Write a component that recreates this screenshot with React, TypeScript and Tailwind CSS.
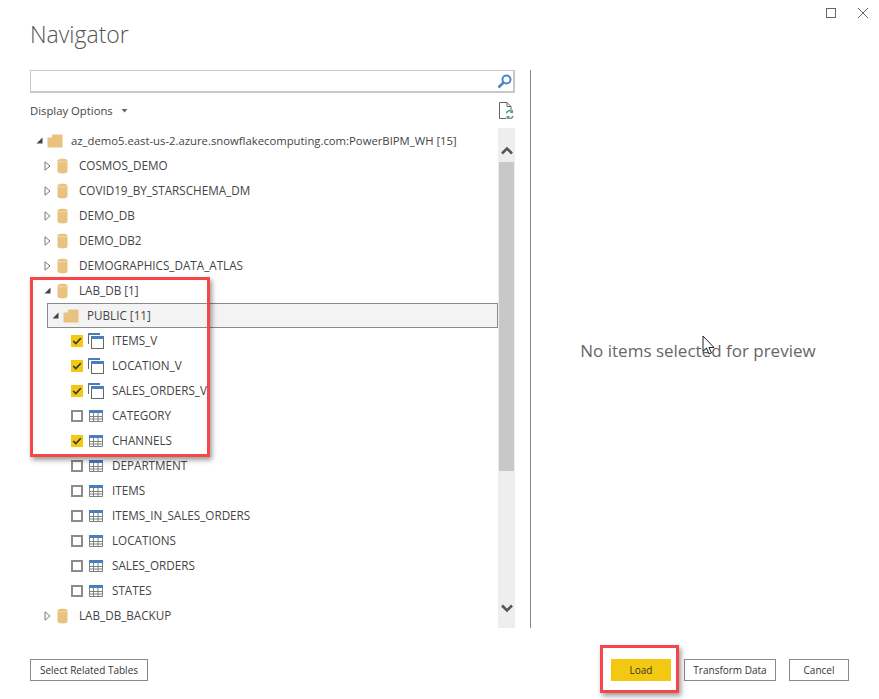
const FONT = "font-['Open_Sans','Noto_Sans',sans-serif]";

type Row =
  | { kind: "root" | "db" | "schema"; label: string; open?: boolean }
  | { kind: "view" | "table"; label: string; checked?: boolean };

const ROWS: Row[] = [
  { kind: "root", label: "az_demo5.east-us-2.azure.snowflakecomputing.com:PowerBIPM_WH [15]", open: true },
  { kind: "db", label: "COSMOS_DEMO" },
  { kind: "db", label: "COVID19_BY_STARSCHEMA_DM" },
  { kind: "db", label: "DEMO_DB" },
  { kind: "db", label: "DEMO_DB2" },
  { kind: "db", label: "DEMOGRAPHICS_DATA_ATLAS" },
  { kind: "db", label: "LAB_DB [1]", open: true },
  { kind: "schema", label: "PUBLIC [11]", open: true },
  { kind: "view", label: "ITEMS_V", checked: true },
  { kind: "view", label: "LOCATION_V", checked: true },
  { kind: "view", label: "SALES_ORDERS_V", checked: true },
  { kind: "table", label: "CATEGORY" },
  { kind: "table", label: "CHANNELS", checked: true },
  { kind: "table", label: "DEPARTMENT" },
  { kind: "table", label: "ITEMS" },
  { kind: "table", label: "ITEMS_IN_SALES_ORDERS" },
  { kind: "table", label: "LOCATIONS" },
  { kind: "table", label: "SALES_ORDERS" },
  { kind: "table", label: "STATES" },
  { kind: "db", label: "LAB_DB_BACKUP" },
];

function Arrow({ open }: { open?: boolean }) {
  return open ? (
    <svg width="7" height="7" viewBox="0 0 7 7" className="shrink-0">
      <path d="M6.5 0.5V6.5H0.5Z" fill="#444" />
    </svg>
  ) : (
    <svg width="7" height="10" viewBox="0 0 7 10" className="shrink-0">
      <path d="M1 0.8L6 5L1 9.2Z" fill="#fff" stroke="#777" />
    </svg>
  );
}

function FolderIcon() {
  return (
    <svg width="16" height="14" viewBox="0 0 16 14" className="shrink-0">
      <path d="M0.5 3.5H5V1.5Q5 0.5 6 0.5H15.5V13.5H0.5Z" fill="#e8c27e" />
    </svg>
  );
}

function DbIcon() {
  return (
    <svg width="11" height="16" viewBox="0 0 11 16" className="shrink-0">
      <path d="M0.5 2.5C0.5 0 10.5 0 10.5 2.5V13.5C10.5 16 0.5 16 0.5 13.5Z" fill="#e8c27e" />
      <path d="M0.5 2.5C0.5 4.4 10.5 4.4 10.5 2.5" fill="none" stroke="#f3dcb2" />
    </svg>
  );
}

function ViewIcon() {
  return (
    <svg width="16" height="16" viewBox="0 0 16 16" className="shrink-0">
      <path d="M0.5 11V1" fill="none" stroke="#666" />
      <rect x="0" y="0" width="12" height="2" fill="#4a7ebb" />
      <rect x="3.5" y="3.5" width="12" height="12" fill="#fff" stroke="#666" />
      <rect x="3" y="3" width="13" height="3" fill="#4a7ebb" />
    </svg>
  );
}

function TableIcon() {
  return (
    <svg width="14" height="12" viewBox="0 0 14 12" className="shrink-0">
      <rect x="0" y="0" width="14" height="3" fill="#4a7ebb" />
      <path d="M0.5 3V11.5H13.5V3M0.5 6.5H13.5M0.5 9H13.5M4.5 3V11.5M9 3V11.5" fill="none" stroke="#808080" />
    </svg>
  );
}

function Check({ checked }: { checked?: boolean }) {
  if (!checked) return <span className="w-3 h-3 shrink-0 border-2 border-[#8c8c8c] bg-white" />;
  return (
    <span className="w-3 h-3 shrink-0 bg-[#f2c811] flex items-center justify-center">
      <svg width="10" height="8" viewBox="0 0 10 8">
        <path d="M1.2 4L3.8 6.6L8.8 1.2" fill="none" stroke="#333" strokeWidth="1.6" />
      </svg>
    </span>
  );
}

function TreeRow({ row }: { row: Row }) {
  if (row.kind === "root") {
    return (
      <div className="h-[25px] flex items-center pl-[6px]">
        <Arrow open />
        <span className="ml-[4px]"><FolderIcon /></span>
        <span className="ml-[8px] pt-[1px] text-[11.3px] whitespace-nowrap">{row.label}</span>
      </div>
    );
  }
  if (row.kind === "db") {
    return (
      <div className="h-[25px] flex items-center pl-[14px]">
        <Arrow open={row.open} />
        <span className="ml-[6px]"><DbIcon /></span>
        <span className="ml-[11px] pt-[1px] whitespace-nowrap">{row.label}</span>
      </div>
    );
  }
  if (row.kind === "schema") {
    return (
      <div className="h-[25px] ml-[17px] flex items-center pl-[4px] border border-[#8a8a8a] bg-[#f3f3f3]">
        <Arrow open />
        <span className="ml-[4px]"><FolderIcon /></span>
        <span className="ml-[8px] pt-[1px] whitespace-nowrap">{row.label}</span>
      </div>
    );
  }
  return (
    <div className="h-[25px] flex items-center pl-[41px]">
      <Check checked={row.checked} />
      <span className={row.kind === "view" ? "ml-[5px] w-[16px]" : "ml-[6px] w-[15px]"}>
        {row.kind === "view" ? <ViewIcon /> : <TableIcon />}
      </span>
      <span className="ml-[8px] pt-[1px] whitespace-nowrap">{row.label}</span>
    </div>
  );
}

function Scrollbar() {
  return (
    <div className="w-[17px] shrink-0 bg-[#eeeeee] flex flex-col items-center">
      <div className="h-[34px] flex items-end pb-[7px]">
        <svg width="12" height="9" viewBox="0 0 12 9">
          <path d="M1 7.5L6 2.5L11 7.5" fill="none" stroke="#555" strokeWidth="2.6" />
        </svg>
      </div>
      <div className="w-[15px] h-[309px] bg-[#c8c8c8]" />
      <div className="flex-1 flex items-end pb-[15px]">
        <svg width="12" height="9" viewBox="0 0 12 9">
          <path d="M1 1.5L6 6.5L11 1.5" fill="none" stroke="#555" strokeWidth="2.6" />
        </svg>
      </div>
    </div>
  );
}

function DialogButton({ label, className }: { label: string; className: string }) {
  return (
    <button className={`h-[22px] pt-[1px] text-[10px] text-[#333] border border-[#8a8a8a] bg-white flex items-center justify-center ${className}`}>
      {label}
    </button>
  );
}

export default function App() {
  return (
    <div className={`relative w-[879px] h-[699px] bg-white overflow-hidden flex flex-col ${FONT}`}>
      {/* Window controls */}
      <div className="h-[8px] relative">
        <div className="absolute left-[826px] top-[8px] w-[10px] h-[10px] border border-[#666]" />
        <svg className="absolute left-[858px] top-[8px]" width="10" height="10" viewBox="0 0 10 10">
          <path d="M0 0L10 10M10 0L0 10" stroke="#666" strokeWidth="1" />
        </svg>
      </div>

      <h1 className="ml-[30px] mt-[8px] h-[36px] leading-[36px] text-[23px] font-light text-[#555]">Navigator</h1>

      <div className="flex mt-[18px] ml-[30px] h-[558px]">
        {/* Left pane */}
        <div className="w-[485px] flex flex-col">
          <div className="h-[23px] border-2 border-[#c8c8c8] border-t border-l flex items-center justify-end pr-[1px]">
            <svg width="15" height="15" viewBox="0 0 15 15">
              <circle cx="9.5" cy="5.5" r="4" fill="none" stroke="#4a86c8" strokeWidth="2" />
              <path d="M6.5 8.5L1.5 13.5" stroke="#4a86c8" strokeWidth="2.6" />
            </svg>
          </div>
          <div className="h-[35px] flex items-center justify-between">
            <div className="flex items-center pt-[1px] text-[11.3px] text-[#444]">
              Display Options
              <svg className="ml-[8px]" width="7" height="4" viewBox="0 0 7 4">
                <path d="M0.5 0H6.5L3.5 3.5Z" fill="#666" />
              </svg>
            </div>
            <svg className="mr-[1px]" width="15" height="17" viewBox="0 0 15 17">
              <path d="M8 0.5H0.5V16.5H7M8 0.5L12 4.5V8M8 0.5V4.5H12" fill="none" stroke="#666" />
              <path d="M7.5 11.5A3 3 0 0 1 13 10M14 14A3 3 0 0 1 8.5 15" fill="none" stroke="#5a9e7c" strokeWidth="1.5" />
              <path d="M14 7.5V11H10.5ZM7.5 17.5V14H11Z" fill="#5a9e7c" />
            </svg>
          </div>
          <div className="flex h-[500px]">
            <div className="flex-1 text-[11.7px] text-[#444] min-w-0">
              {ROWS.map((row) => (
                <TreeRow key={row.label} row={row} />
              ))}
            </div>
            <Scrollbar />
          </div>
        </div>

        <div className="ml-[15px] w-[1px] bg-[#8a8a8a]" />

        {/* Preview pane */}
        <div className="flex-1 flex items-center justify-center pr-[14px] pt-[4px] text-[17px] text-[#666]">
          No items selected for preview
        </div>
      </div>

      {/* Footer */}
      <div className="flex items-center mt-[31px] ml-[30px] mr-[30px]">
        <DialogButton label="Select Related Tables" className="w-[118px]" />
        <div className="flex-1" />
        <button className="h-[22px] w-[60px] pt-[1px] text-[10px] text-[#333] bg-[#f2c811]">Load</button>
        <DialogButton label="Transform Data" className="ml-[13px] w-[92px]" />
        <DialogButton label="Cancel" className="ml-[13px] w-[60px]" />
      </div>

      {/* Annotations */}
      <div className="absolute left-[30px] top-[277px] w-[180px] h-[180px] border-[3px] border-[#f44747] shadow-[2px_3px_5px_rgba(0,0,0,0.4)]" />
      <div className="absolute left-[600px] top-[645px] w-[79px] h-[48px] border-[3px] border-[#f44747] shadow-[2px_3px_5px_rgba(0,0,0,0.4)]" />

      {/* Mouse cursor */}
      <svg className="absolute left-[702px] top-[335px]" width="13" height="21" viewBox="0 0 13 21">
        <path d="M1 1V16L4.5 13L7 19L9.5 18L7 12.5H12Z" fill="#fff" stroke="#222" />
      </svg>
    </div>
  );
}
